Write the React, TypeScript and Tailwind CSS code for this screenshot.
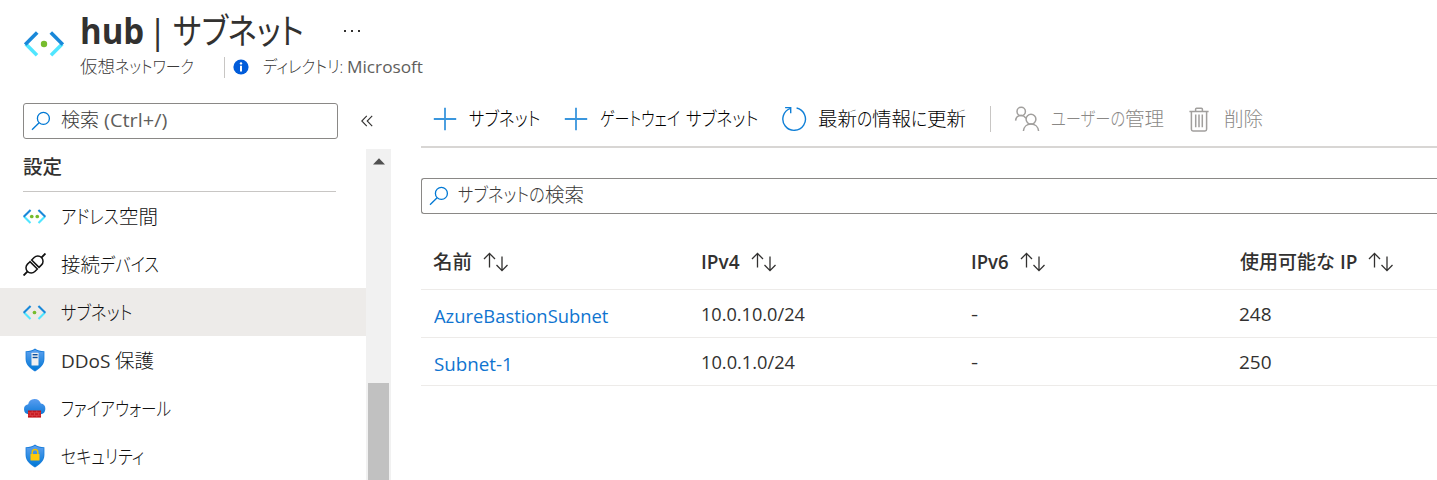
import { useLayoutEffect, useRef, useState } from "react";
import type { ReactNode } from "react";
import clsx from "clsx";

/** A run of text condensed or widened to fill the width given in its classes. */
function Fit({ className, children }: { className: string; children: ReactNode }) {
  const box = useRef<HTMLSpanElement>(null);
  const run = useRef<HTMLSpanElement>(null);
  const [scale, setScale] = useState(1);
  useLayoutEffect(() => {
    if (box.current && run.current) {
      setScale(box.current.clientWidth / run.current.offsetWidth);
    }
  }, []);
  return (
    <span ref={box} className={clsx("inline-block shrink-0 whitespace-nowrap", className)}>
      <span
        ref={run}
        className="inline-block origin-left [font-feature-settings:'palt']"
        style={{ transform: `scaleX(${scale})` }}
      >
        {children}
      </span>
    </span>
  );
}

function VNet({ dots, className }: { dots: 1 | 2; className: string }) {
  return (
    <svg viewBox="0 0 40 26" className={className} fill="none" strokeWidth="3.6">
      <path d="M1.8 13 L13 24.2" stroke="#50e6ff" />
      <path d="M38.2 13 L27 24.2" stroke="#50e6ff" />
      <path d="M13.2 1.6 L1.2 13.6" stroke="#1988d9" />
      <path d="M26.8 1.6 L38.8 13.6" stroke="#1988d9" />
      {dots === 1 ? (
        <circle cx="20" cy="13" r="3.2" fill="#76bc2d" />
      ) : (
        <>
          <circle cx="15.2" cy="13" r="3.2" fill="#76bc2d" />
          <circle cx="24.8" cy="13" r="3.2" fill="#76bc2d" />
        </>
      )}
    </svg>
  );
}

function Plug() {
  return (
    <svg viewBox="0 0 23 23" className="size-[23px]" fill="none" stroke="#111" strokeWidth="1.5">
      <g transform="rotate(45 11.5 11.5)">
        <path d="M11.5 -4 V1.4 M11.5 21.6 V27" strokeWidth="1.9" />
        <path d="M6.3 10.3 V6.8 A5.2 5.2 0 0 1 16.7 6.8 V10.3 Z" />
        <path d="M6.3 12.7 V16.2 A5.2 5.2 0 0 0 16.7 16.2 V12.7 Z" />
      </g>
    </svg>
  );
}

function Shield({ children }: { children: ReactNode }) {
  return (
    <svg viewBox="0 0 20 24" className="h-6 w-5">
      <defs>
        <linearGradient id="shieldFill" x1="0" y1="0" x2="0" y2="1">
          <stop offset="0" stopColor="#5ea0ef" />
          <stop offset="1" stopColor="#0078d4" />
        </linearGradient>
      </defs>
      <path
        d="M10 .6 C12.6 2.8 15.4 3 19.4 3.2 V11 C19.4 17 14.4 21 10 23.4 C5.6 21 .6 17 .6 11 V3.2 C4.6 3 7.4 2.8 10 .6Z"
        fill="#1b7fdc"
      />
      <path
        d="M10 1.8 C12.6 3.6 15 4 18.5 4.1 V11 C18.5 16.4 14 20 10 22.3 C6 20 1.5 16.4 1.5 11 V4.1 C5 4 7.4 3.6 10 1.8Z"
        fill="url(#shieldFill)"
      />
      {children}
    </svg>
  );
}

function DdosIcon() {
  return (
    <Shield>
      <rect x="6.5" y="4.8" width="7" height="12.8" rx=".5" fill="#f0f0f0" />
      <rect x="7.6" y="6" width="5" height="1.4" fill="#0b4f9e" />
      <rect x="7.6" y="8.8" width="5" height="1.4" fill="#0b4f9e" />
    </Shield>
  );
}

function LockIcon() {
  return (
    <Shield>
      <path d="M7.2 11 V8.2 a2.8 2.8 0 0 1 5.6 0 V11" fill="none" stroke="#f0c000" strokeWidth="1.5" />
      <rect x="5.5" y="10" width="9" height="6.6" rx=".6" fill="#ffca0a" />
    </Shield>
  );
}

function FirewallIcon() {
  return (
    <svg viewBox="0 0 24 22" className="h-[22px] w-6">
      <defs>
        <linearGradient id="cloudFill" x1="0" y1="0" x2="0" y2="1">
          <stop offset="0" stopColor="#5a9df0" />
          <stop offset="1" stopColor="#0f7bd8" />
        </linearGradient>
      </defs>
      <path
        d="M6 17.5 A5.3 5.3 0 0 1 5.4 7 A6.8 6.8 0 0 1 18.6 6.4 A5.6 5.6 0 0 1 18.3 17.5Z"
        fill="url(#cloudFill)"
      />
      <rect x="5.2" y="13.6" width="13.6" height="7.4" fill="#c4161c" />
      <path
        d="M5.2 16 H18.8 M5.2 18.6 H18.8 M9.6 13.6 V16 M14.4 13.6 V16 M7.6 16 V18.6 M12 16 V18.6 M16.4 16 V18.6 M9.6 18.6 V21 M14.4 18.6 V21"
        stroke="#e8606a"
        strokeWidth=".5"
      />
    </svg>
  );
}

function Magnifier() {
  return (
    <svg viewBox="0 0 20 20" className="size-5 shrink-0" fill="none" stroke="#0078d4" strokeWidth="1.3">
      <circle cx="12.4" cy="7.4" r="6" />
      <path d="M8.1 11.7 L1 18.8" />
    </svg>
  );
}

function Plus() {
  return (
    <svg viewBox="0 0 24 24" className="size-6 shrink-0" stroke="#3a96dd" strokeWidth="1.8">
      <path d="M12 .8 V23.2 M.8 12 H23.2" />
    </svg>
  );
}

function Refresh() {
  return (
    <svg viewBox="0 0 26 26" className="size-[26px] shrink-0" fill="none" stroke="#0f7fd7" strokeWidth="1.4">
      <path d="M15.6 2 A11.3 11.3 0 1 1 9.6 2.3" />
      <path d="M4.1 1.6 H9.7 V7.2" />
    </svg>
  );
}

function Users() {
  return (
    <svg viewBox="0 0 26 26" className="size-[26px] shrink-0" fill="none" stroke="#a19f9d" strokeWidth="1.5">
      <circle cx="7.2" cy="5.4" r="4.2" />
      <path d="M1.6 14.6 C1.8 11.6 4 9.6 7.2 9.6 C9.4 9.6 10.8 10.6 12 12.2" />
      <circle cx="17" cy="13.2" r="4.9" />
      <path d="M9.4 25 C9.8 21 12.8 18.1 17 18.1 C21.2 18.1 24.2 21 24.6 25" />
    </svg>
  );
}

function Trash() {
  return (
    <svg viewBox="0 0 20 25" className="h-[25px] w-5 shrink-0" fill="none" stroke="#a19f9d" strokeWidth="1.5">
      <path d="M.4 4.4 H19.6 M6.6 4 V2.2 Q6.6 1.2 7.6 1.2 H12.4 Q13.4 1.2 13.4 2.2 V4" />
      <path d="M2.4 4.4 V22.2 Q2.4 23.9 4 23.9 H16 Q17.6 23.9 17.6 22.2 V4.4" />
      <path d="M6.7 7.6 V20.3 M10 7.6 V20.3 M13.3 7.6 V20.3" />
    </svg>
  );
}

function SortArrows() {
  return (
    <svg viewBox="0 0 26 20" className="h-5 w-[26px] shrink-0" fill="none" stroke="#323130" strokeWidth="1.3">
      <path d="M6.5 15.6 V1.6 M1 7 L6.5 1.4 L12 7" />
      <path d="M19 4.6 V18.4 M13.5 13 L19 18.6 L24.5 13" />
    </svg>
  );
}

function MenuItem({ icon, selected, children }: { icon: ReactNode; selected?: boolean; children: ReactNode }) {
  return (
    <li className={clsx("flex h-12 items-center pl-[23px]", selected && "bg-[#edebe9]")}>
      <span className="flex w-[23px] shrink-0 items-center justify-center">{icon}</span>
      <span className="flex items-center pl-[15px] pt-px font-light text-[#111]">{children}</span>
    </li>
  );
}

function Column({ children, first }: { children: ReactNode; first?: boolean }) {
  return (
    <div className={clsx("flex shrink-0 items-center font-semibold", first ? "w-[268px]" : "w-[269.5px]")}>
      {children}
      <span className="pl-[11px]">
        <SortArrows />
      </span>
    </div>
  );
}

const subnets = [
  { name: "AzureBastionSubnet", nameWidth: "w-[174px]", ipv4: "10.0.10.0/24", ipv4Width: "w-[104px]", free: "248" },
  { name: "Subnet-1", nameWidth: "w-[79px]", ipv4: "10.0.1.0/24", ipv4Width: "w-[94px]", free: "250" },
];

export default function App() {
  return (
    <div className="flex h-[480px] w-full flex-col overflow-hidden bg-white font-['Open_Sans','Noto_Sans_CJK_JP',sans-serif] text-[19px] leading-6 text-[#323130]">
      <header className="flex h-[102px] shrink-0 pl-6">
        <VNet dots={1} className="mt-[31px] h-[26px] w-10 shrink-0" />
        <div className="pl-4 pt-[7px]">
          <h1 className="flex h-12 items-center text-[35px] leading-[48px]">
            <Fit className="w-[64px] font-bold">hub</Fit>
            <Fit className="ml-[4px] w-[19px]">|</Fit>
            <Fit className="ml-[6px] w-[131px]">サブネット</Fit>
            <span className="ml-[40px] flex gap-[5px]">
              <i className="size-[2px] bg-[#323130]" />
              <i className="size-[2px] bg-[#323130]" />
              <i className="size-[2px] bg-[#323130]" />
            </span>
          </h1>
          <div className="flex h-6 items-center text-[17px] text-[#605e5c]">
            <span className="flex font-light text-[#3b3a39]">
              <Fit className="w-[35px]">仮想</Fit>
              <Fit className="w-[79px]">ネットワーク</Fit>
            </span>
            <span className="ml-[30px] h-[21px] w-px bg-[#c8c6c4]" />
            <svg viewBox="0 0 16 16" className="ml-[8px] size-4">
              <circle cx="8" cy="8" r="7.6" fill="#015cda" />
              <path d="M7 6.8 H9 V12.4 H7Z" fill="#fff" />
              <circle cx="8" cy="4.4" r="1.2" fill="#fff" />
            </svg>
            <Fit className="ml-[14px] w-[80px] font-light text-[#3b3a39]">ディレクトリ:</Fit>
            <Fit className="ml-[4px] w-[76px]">Microsoft</Fit>
          </div>
        </div>
      </header>

      <div className="flex min-h-0 flex-1">
        <aside className="flex w-[391px] shrink-0 flex-col">
          <div className="flex h-[47px] shrink-0 pl-[23px] pt-px">
            <div className="flex h-9 w-[315px] items-center rounded-[3px] border border-[#8a8886] pl-[7px] text-[#605e5c]">
              <Magnifier />
              <span className="flex items-center pb-[2px] pl-[10px]">
                <Fit className="w-[38px] font-light text-[#3b3a39]">検索</Fit>
                <Fit className="ml-[5px] w-[63px]">(Ctrl+/)</Fit>
              </span>
            </div>
            <svg viewBox="0 0 12 12" className="ml-[23px] mt-3 size-3" fill="none" stroke="#323130" strokeWidth="1.1">
              <path d="M5.8 .8 L.8 6 L5.8 11.2 M11.2 .8 L6.2 6 L11.2 11.2" />
            </svg>
          </div>
          <div className="flex min-h-0 flex-1">
            <nav className="w-[366px]">
              <div className="ml-[23px] flex h-[43px] w-[313px] items-center border-b border-[#c8c6c4] pb-[7px] font-medium">
                <Fit className="w-[39px]">設定</Fit>
              </div>
              <ul>
                <MenuItem icon={<VNet dots={2} className="h-[15px] w-[23px]" />}>
                  <Fit className="w-[58px]">アドレス</Fit>
                  <Fit className="w-[39px]">空間</Fit>
                </MenuItem>
                <MenuItem icon={<Plug />}>
                  <Fit className="w-[39px]">接続</Fit>
                  <Fit className="w-[59px]">デバイス</Fit>
                </MenuItem>
                <MenuItem selected icon={<VNet dots={1} className="h-[15px] w-[23px]" />}>
                  <Fit className="w-[71px]">サブネット</Fit>
                </MenuItem>
                <MenuItem icon={<DdosIcon />}>
                  <Fit className="w-[49px] font-normal text-[#323130]">DDoS</Fit>
                  <Fit className="ml-[5px] w-[39px]">保護</Fit>
                </MenuItem>
                <MenuItem icon={<FirewallIcon />}>
                  <Fit className="w-[110px]">ファイアウォール</Fit>
                </MenuItem>
                <MenuItem icon={<LockIcon />}>
                  <Fit className="w-[83px]">セキュリティ</Fit>
                </MenuItem>
              </ul>
            </nav>
            <div className="flex w-[25px] flex-col items-center bg-[#f1f1f1] pt-[9px]">
              <svg viewBox="0 0 12 7" className="h-[7px] w-3 shrink-0" fill="#505050">
                <path d="M6 .3 L12 6.5 H0Z" />
              </svg>
              <div className="mt-[218px] w-[21px] flex-1 bg-[#c1c1c1]" />
            </div>
          </div>
        </aside>

        <main className="ml-[30px] flex min-w-0 flex-1 flex-col">
          <div className="flex h-[46px] shrink-0 items-center border-b-2 border-[#d8d6d4] pb-[10px] pl-3 font-light text-black">
            <Plus />
            <Fit className="ml-3 w-[71px]">サブネット</Fit>
            <span className="ml-6 flex">
              <Plus />
            </span>
            <Fit className="ml-3 w-[80px]">ゲートウェイ</Fit>
            <Fit className="ml-[6px] w-[72px]">サブネット</Fit>
            <span className="ml-[23px] flex">
              <Refresh />
            </span>
            <Fit className="ml-[11px] w-[39px]">最新</Fit>
            <Fit className="w-[15px]">の</Fit>
            <Fit className="w-[39px]">情報</Fit>
            <Fit className="w-[16px]">に</Fit>
            <Fit className="w-[39px]">更新</Fit>
            <span className="ml-[24px] h-[26px] w-px bg-[#c8c6c4]" />
            <span className="ml-[23px] flex">
              <Users />
            </span>
            <span className="ml-[11px] flex text-[#8a8886]">
              <Fit className="w-[74px]">ユーザーの</Fit>
              <Fit className="w-[39px]">管理</Fit>
            </span>
            <span className="ml-[25px] flex">
              <Trash />
            </span>
            <Fit className="ml-[15px] w-[39px] text-[#8a8886]">削除</Fit>
          </div>

          <div className="mt-[30px] flex h-9 shrink-0 items-center rounded-l-[3px] border border-r-0 border-[#8a8886] pl-[7px]">
            <Magnifier />
            <span className="flex pb-[2px] pl-[9px] font-light text-[#3b3a39]">
              <Fit className="w-[87px]">サブネットの</Fit>
              <Fit className="w-[39px]">検索</Fit>
            </span>
          </div>

          <div className="mt-5 flex h-14 shrink-0 items-center border-b border-[#edebe9] pl-3">
            <Column first>
              <Fit className="w-[39px] font-medium">名前</Fit>
            </Column>
            <Column>
              <Fit className="w-[39px]">IPv4</Fit>
            </Column>
            <Column>
              <Fit className="w-[38px]">IPv6</Fit>
            </Column>
            <Column>
              <Fit className="w-[95px] font-medium">使用可能な</Fit>
              <Fit className="ml-[5px] w-[17px]">IP</Fit>
            </Column>
          </div>
          {subnets.map((s) => (
            <div key={s.name} className="flex h-12 shrink-0 items-center border-b border-[#edebe9] pl-[13px]">
              <div className="w-[267px] shrink-0 pt-[4px] text-[#0f74d0]">
                <Fit className={s.nameWidth}>{s.name}</Fit>
              </div>
              <div className="w-[270px] shrink-0">
                <Fit className={s.ipv4Width}>{s.ipv4}</Fit>
              </div>
              <div className="w-[268px] shrink-0">
                <Fit className="w-[7px]">-</Fit>
              </div>
              <Fit className="w-[33px]">{s.free}</Fit>
            </div>
          ))}
        </main>
      </div>
    </div>
  );
}
